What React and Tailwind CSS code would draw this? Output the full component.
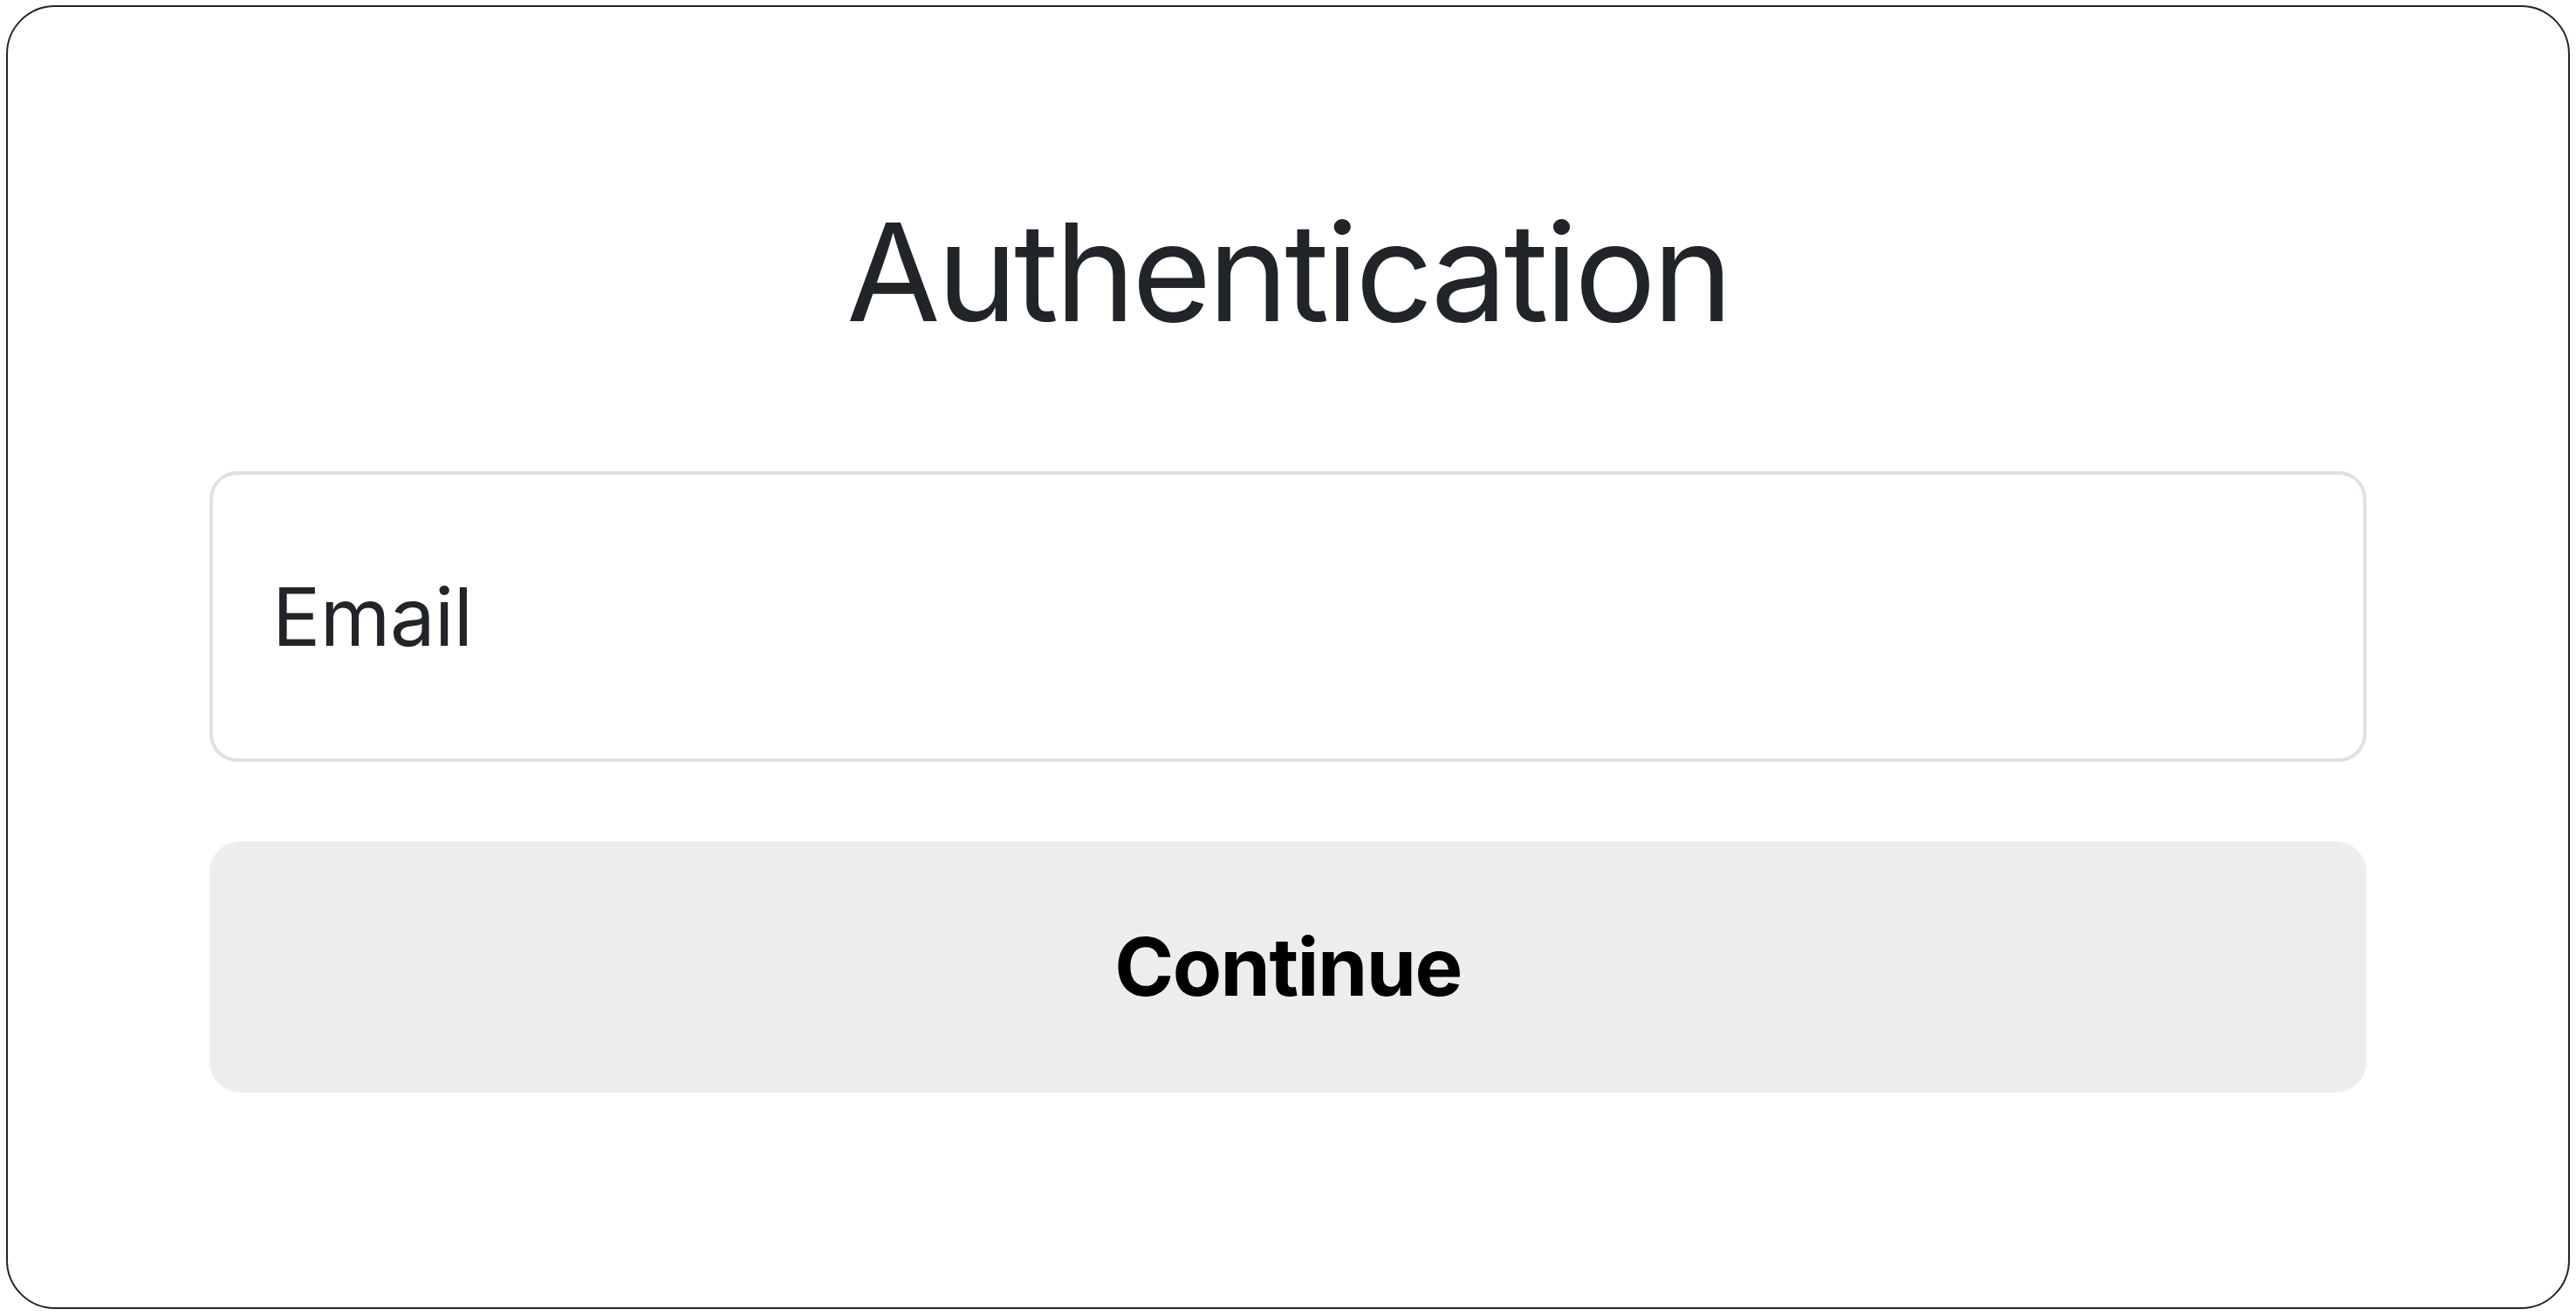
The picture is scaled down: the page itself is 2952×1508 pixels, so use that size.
export default function App() {
  return (
    <div className="min-h-screen bg-white pl-[7px] pt-[6px]" style={{ fontFamily: 'Inter, "Noto Sans", sans-serif' }}>
      <div className="flex h-[1494px] w-[2938px] flex-col items-stretch rounded-[56px] border-2 border-[#212529] px-[231px] pt-[226px]">
        <h1 className="text-center text-[156px] font-normal leading-none tracking-[-4px] text-[#212529]">Authentication</h1>
        <input
          type="email"
          placeholder="Email"
          className="mt-[150px] h-[333px] w-full rounded-[32px] border-4 border-[#dee2e6] bg-white px-[68px] text-[92px] tracking-[-0.5px] text-[#212529] outline-none placeholder:text-[#212529]"
        />
        <button
          type="button"
          className="mt-[91px] h-[288px] w-full rounded-[36px] bg-[#ededed] text-[92px] font-bold tracking-[-1.5px] text-black"
        >
          Continue
        </button>
      </div>
    </div>
  );
}
